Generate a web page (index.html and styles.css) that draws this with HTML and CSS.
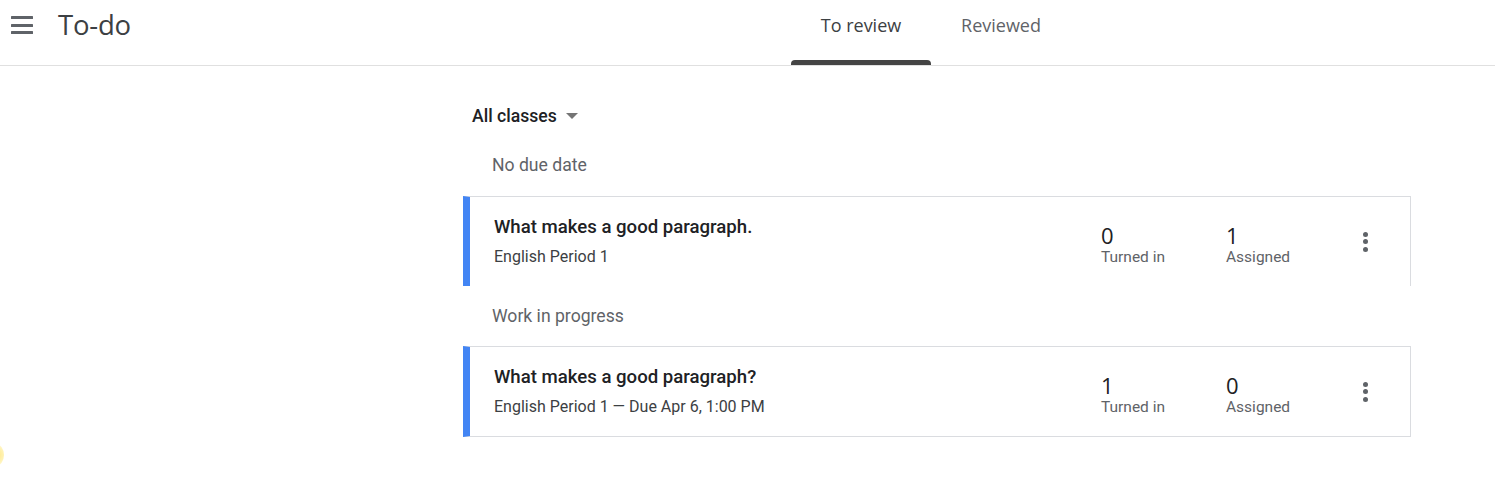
FILE: index.html
```html
<!DOCTYPE html>
<html lang="en">
<head>
<meta charset="utf-8">
<title>To-do</title>
<link rel="stylesheet" href="styles.css">
</head>
<body>
<header class="topbar">
  <div class="brand">
    <button class="menu-btn" aria-label="Main menu">
      <span class="bar"></span><span class="bar"></span><span class="bar"></span>
    </button>
    <h1 class="title">To-do</h1>
  </div>
  <nav class="tabs">
    <a class="tab active">To review</a>
    <a class="tab">Reviewed</a>
  </nav>
</header>

<main class="content">
  <div class="filter">
    <span class="filter-label">All classes</span>
    <span class="caret"></span>
  </div>

  <div class="section-label first">No due date</div>
  <div class="card open">
    <div class="card-info">
      <div class="card-title">What makes a good paragraph.</div>
      <div class="card-sub">English Period 1</div>
    </div>
    <div class="stat"><div class="stat-num">0</div><div class="stat-label">Turned in</div></div>
    <div class="stat"><div class="stat-num">1</div><div class="stat-label">Assigned</div></div>
    <div class="kebab"><span></span><span></span><span></span></div>
  </div>

  <div class="section-label">Work in progress</div>
  <div class="card">
    <div class="card-info">
      <div class="card-title">What makes a good paragraph?</div>
      <div class="card-sub">English Period 1 — Due Apr 6, 1:00 PM</div>
    </div>
    <div class="stat"><div class="stat-num">1</div><div class="stat-label">Turned in</div></div>
    <div class="stat"><div class="stat-num">0</div><div class="stat-label">Assigned</div></div>
    <div class="kebab"><span></span><span></span><span></span></div>
  </div>
</main>
<div class="glow"></div>
</body>
</html>
```

FILE: styles.css
```css
* { box-sizing: border-box; }
html, body { margin: 0; padding: 0; background: #fff; }
body {
  font-family: Roboto, "Liberation Sans", Arial, sans-serif;
  color: #202124;
  overflow: hidden;
}

.topbar {
  height: 66px;
  border-bottom: 1px solid #e0e0e0;
  display: flex;
  position: relative;
}
.brand {
  display: flex;
  align-items: flex-start;
}
.menu-btn {
  border: 0;
  background: none;
  padding: 0;
  margin: 16px 0 0 11px;
  width: 22px;
  height: 18px;
  display: flex;
  flex-direction: column;
  justify-content: space-between;
}
.menu-btn .bar {
  display: block;
  height: 3px;
  width: 22px;
  background: #5f6368;
  border-radius: 0.5px;
}
.title {
  margin: 0 0 0 25px;
  font-family: "Open Sans", Lato, sans-serif;
  font-weight: 400;
  font-size: 27.5px;
  line-height: 50px;
  color: #3c4043;
  letter-spacing: -0.2px;
}
.tabs {
  position: absolute;
  left: 791px;
  top: 0;
  display: flex;
  height: 65px;
}
.tab {
  width: 140px;
  height: 65px;
  text-align: center;
  font-family: "Open Sans", Lato, sans-serif;
  font-weight: 500;
  font-size: 18px;
  line-height: 50px;
  color: #5f6368;
  position: relative;
}
.tab.active { color: #3c4043; }
.tab.active::after {
  content: "";
  position: absolute;
  left: 0;
  right: 0;
  bottom: 0;
  height: 5px;
  background: #444;
  border-radius: 4px 4px 0 0;
}

.content {
  margin-left: 463px;
  width: 948px;
  padding-top: 30px;
}
.filter {
  height: 40px;
  display: flex;
  align-items: center;
  padding-left: 9px;
}
.filter-label {
  font-size: 17.6px;
  font-weight: 500;
  color: #202124;
}
.caret {
  width: 0;
  height: 0;
  margin-left: 9px;
  border-left: 6px solid transparent;
  border-right: 6px solid transparent;
  border-top: 6px solid #757575;
}
.section-label {
  padding: 20px 0 20px 29px;
  font-size: 17.6px;
  line-height: 20px;
  color: #5f6368;
}
.section-label.first { padding-top: 19px; padding-bottom: 21px; }

.card {
  display: flex;
  align-items: center;
  height: 91px;
  border: 1px solid #dadce0;
  border-left: 7px solid #4285f4;
  padding-left: 24px;
  padding-right: 31px;
}
.card.open {
  height: 90px;
  border-bottom: 0;
}
.card-info {
  flex: 1;
  padding-bottom: 2px;
}
.card-title {
  font-size: 18.6px;
  font-weight: 500;
  line-height: 24px;
  color: #202124;
}
.card-sub {
  margin-top: 8px;
  font-size: 16px;
  line-height: 20px;
  color: #3c4043;
}
.stat {
  width: 125px;
  padding-top: 4px;
}
.stat-num {
  font-family: "Open Sans", Roboto, sans-serif;
  font-size: 22px;
  line-height: 26px;
  color: #202124;
}
.stat-label {
  font-size: 15.5px;
  line-height: 18px;
  color: #5f6368;
}
.kebab {
  width: 28px;
  height: 24px;
  display: flex;
  flex-direction: column;
  align-items: center;
  justify-content: space-between;
  padding: 2px 0;
}
.kebab span {
  width: 5px;
  height: 5px;
  border-radius: 50%;
  background: #5f6368;
}

.glow {
  position: absolute;
  left: -12px;
  top: 444px;
  width: 16px;
  height: 22px;
  border-radius: 50%;
  background: radial-gradient(circle, #ffe680 0%, #fff3b8 60%, rgba(255,255,255,0) 100%);
}
```
